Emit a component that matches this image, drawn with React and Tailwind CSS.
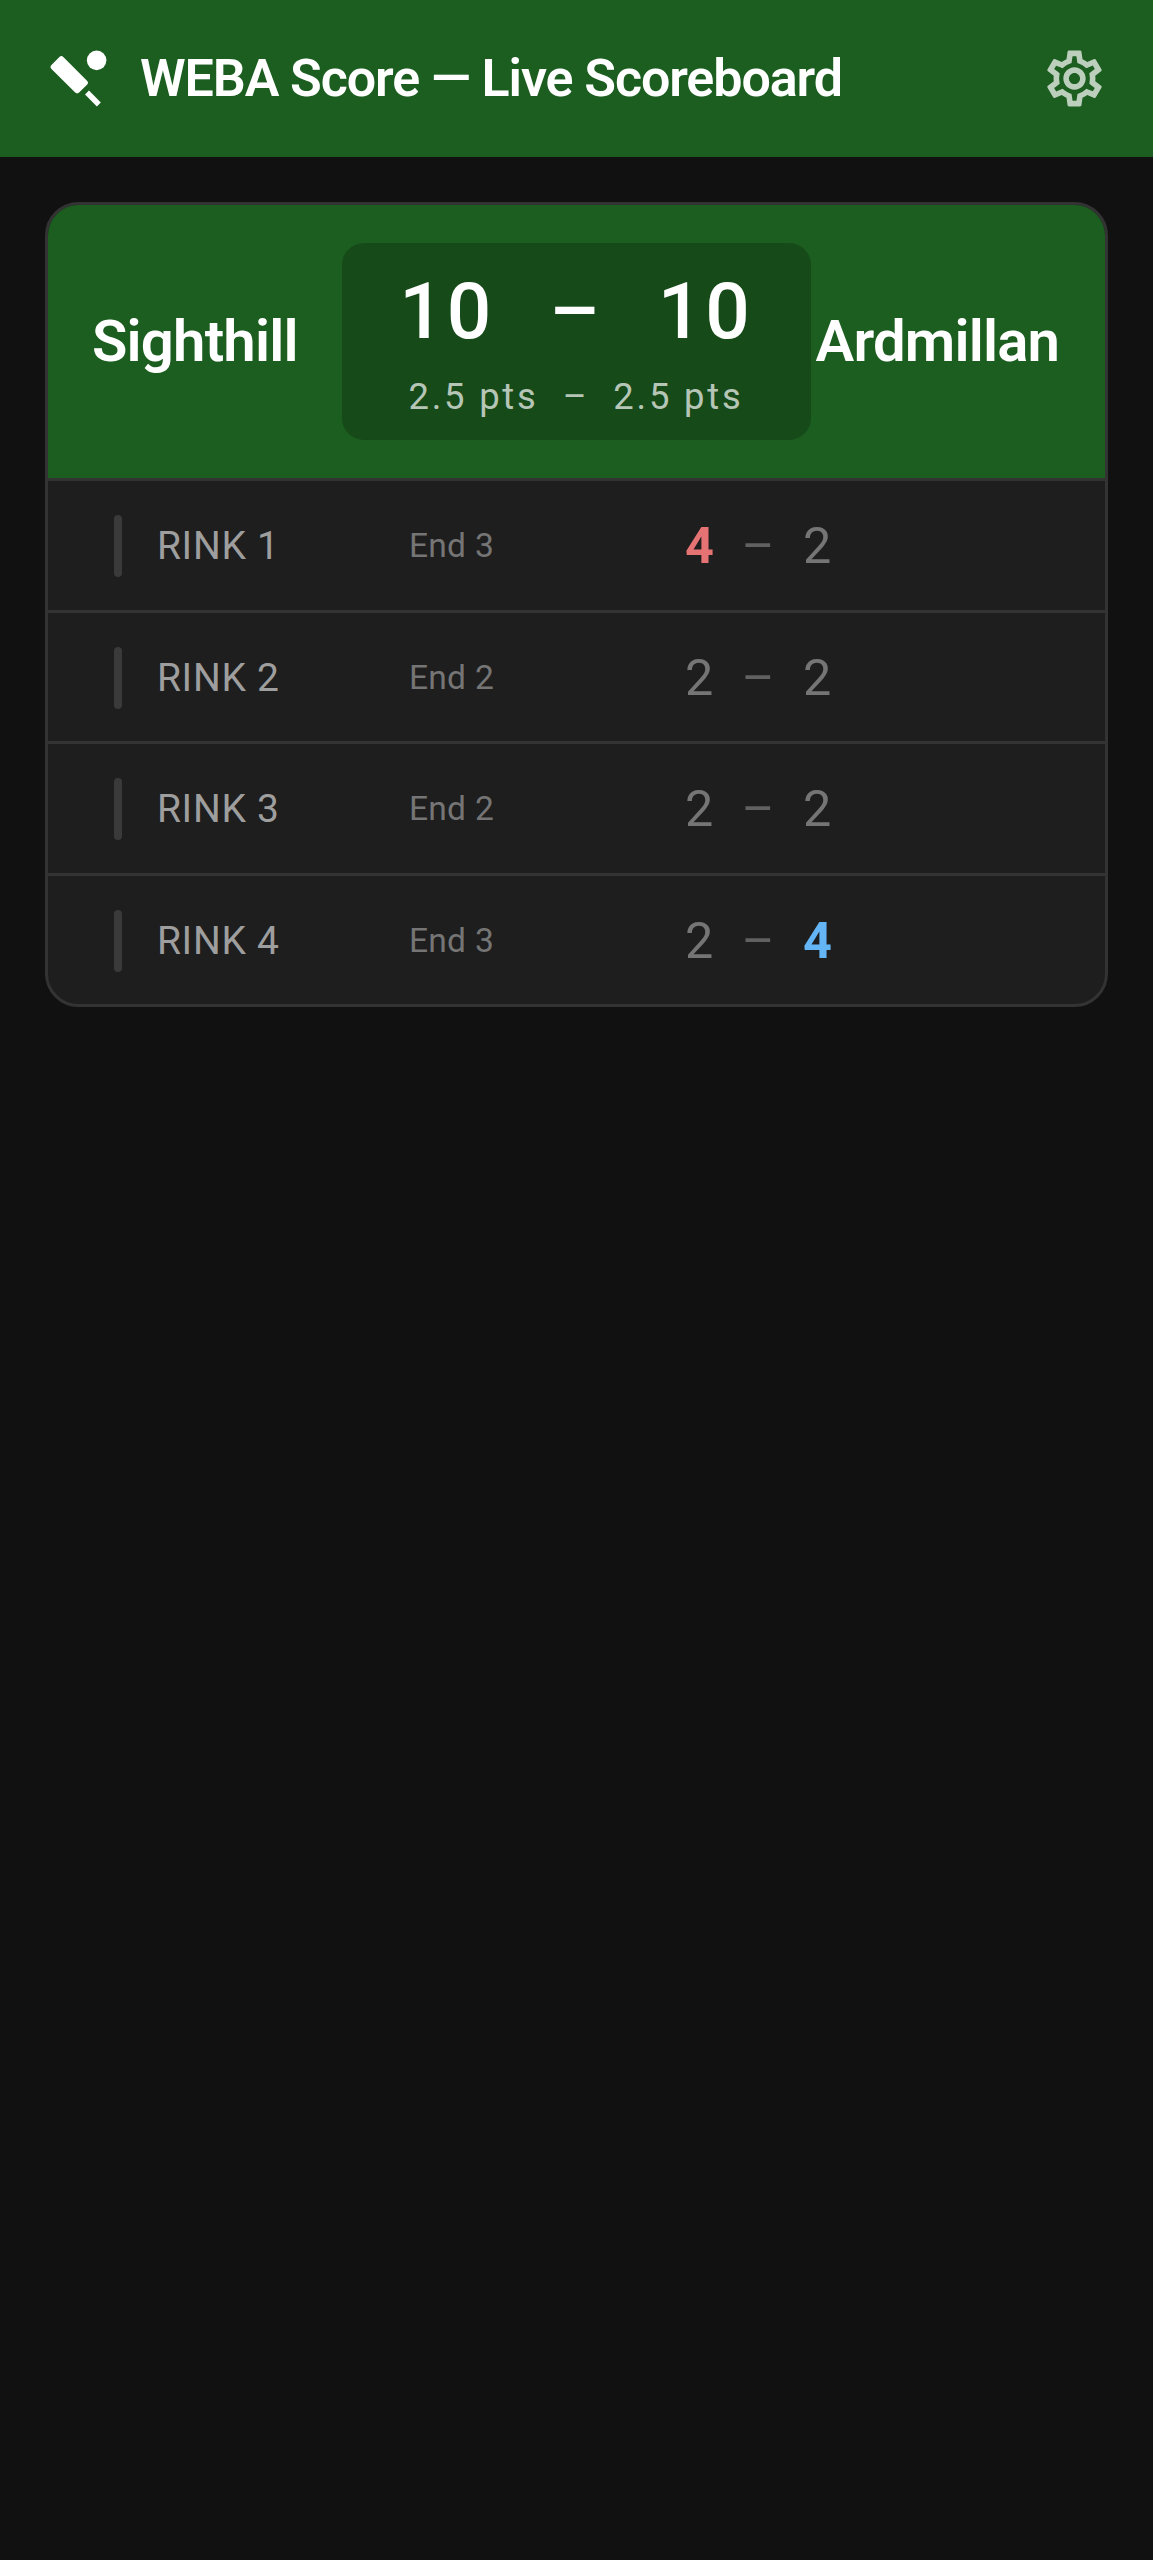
import React from 'react';
import { MdSportsCricket, MdOutlineSettings } from 'react-icons/md';

const rinks = [
  { name: 'RINK 1', end: 'End 3', home: 4, away: 2 },
  { name: 'RINK 2', end: 'End 2', home: 2, away: 2 },
  { name: 'RINK 3', end: 'End 2', home: 2, away: 2 },
  { name: 'RINK 4', end: 'End 3', home: 2, away: 4 },
];

const RinkRow = ({ rink, last }) => {
  const homeWins = rink.home > rink.away;
  const awayWins = rink.away > rink.home;

  return (
    <div className={`flex items-center pl-[66px] ${last ? 'h-[128.5px] pt-[3px]' : 'h-[131.5px] pt-[2px] border-b-[3px] border-[#333333]'}`}>
      <div className="w-[8.4px] h-[62px] rounded-full bg-[#3a3a3a]" />
      <div className="w-[252px] ml-[34.5px] text-[39px] tracking-[0.7px] text-[#9e9e9e]">{rink.name}</div>
      <div className="w-[276px] text-[33.6px] tracking-[0.3px] text-[#757575]">{rink.end}</div>
      <div className="flex items-center text-[50.4px] leading-none">
        <span className={`w-[56.5px] ${homeWins ? 'font-bold text-[#e57373]' : 'text-[#757575]'}`}>{rink.home}</span>
        <span className="w-[61.5px] text-[#616161]">–</span>
        <span className={awayWins ? 'font-bold text-[#64b5f6]' : 'text-[#757575]'}>{rink.away}</span>
      </div>
    </div>
  );
};

const App = () => {
  return (
    <div className="min-h-[2560px] bg-[#111111] font-['Roboto',sans-serif]">
      <header className="flex items-center justify-between h-[157px] px-[45px] bg-[#1b5e20]">
        <div className="flex items-center gap-[28px]">
          <MdSportsCricket className="text-white" size={67} />
          <h1 className="text-[52px] font-semibold tracking-[-1.1px] text-white">WEBA Score — Live Scoreboard</h1>
        </div>
        <MdOutlineSettings className="text-white/70" size={67} />
      </header>

      <main className="p-[45px]">
        <div className="rounded-[33.6px] border-[3px] border-[#333333] bg-[#1e1e1e] overflow-hidden">
          <div className="flex items-center gap-[5px] h-[276px] pl-[44px] pr-[45px] bg-[#1b5e20] border-b-[3px] border-[#333333]">
            <div className="flex-1 text-[58px] font-semibold tracking-[-0.8px] text-white">Sighthill</div>
            <div className="w-[469px] h-[197px] rounded-[22px] bg-[#164a18] flex flex-col items-center justify-center">
              <div className="flex items-center mt-[14px] text-[78.4px] leading-none font-medium tracking-[3px] text-white">
                <span>10</span>
                <span className="mx-[55px]">–</span>
                <span>10</span>
              </div>
              <div className="flex items-center mt-[20px] text-[36.4px] tracking-[2.8px] text-white/70">
                <span>2.5 pts</span>
                <span className="mx-[24px]">–</span>
                <span>2.5 pts</span>
              </div>
            </div>
            <div className="flex-1 text-[58px] font-semibold tracking-[-0.8px] text-white">Ardmillan</div>
          </div>
          {rinks.map((rink, i) => (
            <RinkRow key={rink.name} rink={rink} last={i === rinks.length - 1} />
          ))}
        </div>
      </main>
    </div>
  );
};

export default App;
